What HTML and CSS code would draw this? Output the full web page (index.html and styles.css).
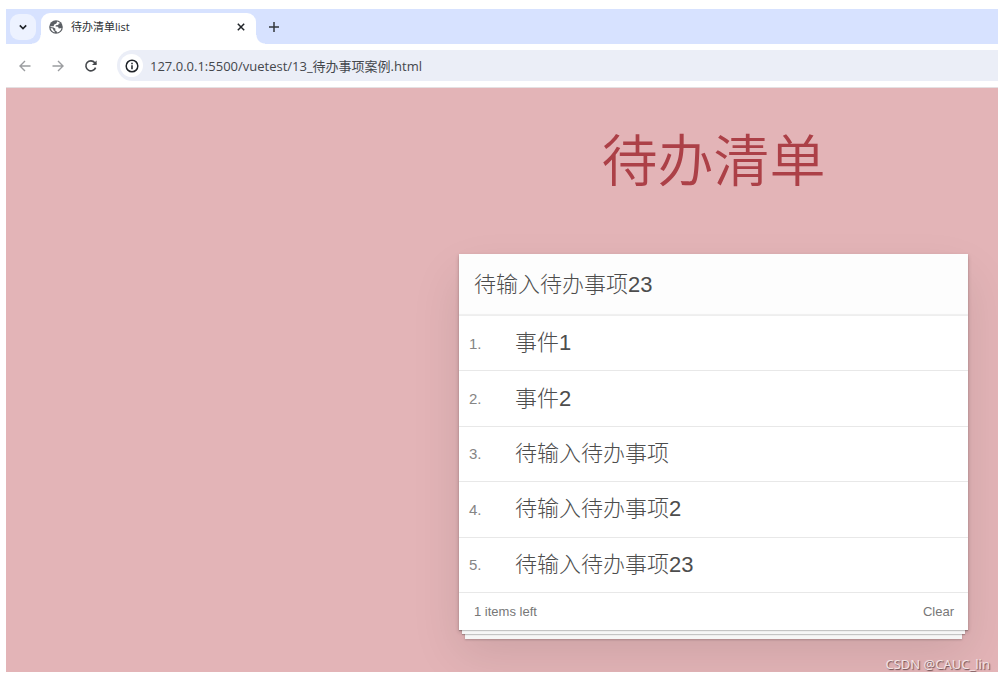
FILE: index.html
```html
<!DOCTYPE html>
<html lang="zh-CN">
<head>
<meta charset="utf-8">
<meta name="viewport" content="width=device-width, initial-scale=1">
<title>待办清单list</title>
<link rel="stylesheet" href="styles.css">
</head>
<body>
<div class="browser">
  <header class="tabs">
    <button class="tab-search" aria-label="Search tabs">
      <svg width="10" height="10" viewBox="0 0 10 10"><path d="M1.8 3.4 5 6.6 8.2 3.4" fill="none" stroke="#1f2328" stroke-width="1.6"/></svg>
    </button>
    <div class="tab">
      <svg class="globe" width="14" height="14" viewBox="0 0 14 14"><circle cx="7" cy="7" r="6.8" fill="#5b5f64"/><path d="M8.2 1.5C9.6 1.8 10.6 2.4 11.3 3.3L9.8 3.6 9.2 5 6.8 5.2 6.6 6.6 9 6.8 9.8 8.4 12.5 8A5.6 5.6 0 0 1 8 12.5L7.6 11.2 6.2 10.4 6.4 8.8 4.6 7.6 1.5 6.9 1.5 6.2 4.6 6.2 5.2 4.6 7.4 3.6Z" fill="#fff"/><path d="M1.6 8 3.8 8.6 4.6 10.4 5.6 10.9 5.6 12.4A5.5 5.5 0 0 1 1.6 8Z" fill="#fff"/></svg>
      <span class="tab-title">待办清单list</span>
      <button class="icon-button" aria-label="Close tab">
        <svg width="10" height="10" viewBox="0 0 10 10"><path d="M1.8 1.8 8.2 8.2M8.2 1.8 1.8 8.2" stroke="#1f2328" stroke-width="1.5"/></svg>
      </button>
    </div>
    <button class="icon-button new-tab" aria-label="New tab">
      <svg width="12" height="12" viewBox="0 0 12 12"><path d="M6 1V11M1 6H11" stroke="#33373c" stroke-width="1.5"/></svg>
    </button>
  </header>
  <nav class="toolbar">
    <button class="icon-button" aria-label="Back">
      <svg width="14" height="14" viewBox="0 0 14 14"><path d="M12.5 7H2M7 2 2 7 7 12" fill="none" stroke="#9b9da0" stroke-width="1.4"/></svg>
    </button>
    <button class="icon-button" aria-label="Forward">
      <svg width="14" height="14" viewBox="0 0 14 14"><path d="M1.5 7H12M7 2 12 7 7 12" fill="none" stroke="#9b9da0" stroke-width="1.4"/></svg>
    </button>
    <button class="icon-button" aria-label="Reload">
      <svg width="14" height="14" viewBox="0 0 14 14"><path d="M11.6 8.6A5 5 0 1 1 10.8 3.7L12 5" fill="none" stroke="#45484c" stroke-width="1.6"/><path d="M12.6 1.4V6H8Z" fill="#45484c"/></svg>
    </button>
    <div class="address">
      <button class="site-info" aria-label="Site information">
        <svg width="14" height="14" viewBox="0 0 14 14"><circle cx="7" cy="7" r="5.8" fill="none" stroke="#1f2328" stroke-width="1.5"/><path d="M7 6.3V10.2M7 3.7V5.2" stroke="#1f2328" stroke-width="1.5"/></svg>
      </button>
      <input class="url" type="text" aria-label="Address" value="127.0.0.1:5500/vuetest/13_待办事项案例.html">
    </div>
  </nav>
  <main class="page">
    <section class="todo">
      <h1 class="title">待办清单</h1>
      <div class="card">
        <input class="new-todo" type="text" aria-label="新待办事项" value="待输入待办事项23">
        <ol class="list">
          <li class="item"><span class="index">1.</span><span class="label">事件1</span></li>
          <li class="item"><span class="index">2.</span><span class="label">事件2</span></li>
          <li class="item"><span class="index">3.</span><span class="label">待输入待办事项</span></li>
          <li class="item"><span class="index">4.</span><span class="label">待输入待办事项2</span></li>
          <li class="item"><span class="index">5.</span><span class="label">待输入待办事项23</span></li>
        </ol>
        <footer class="summary">
          <span>1 items left</span>
          <button class="clear">Clear</button>
        </footer>
      </div>
    </section>
    <span class="watermark">CSDN @CAUC_lin</span>
  </main>
</div>
</body>
</html>
```

FILE: styles.css
```css
* {
  box-sizing: border-box;
}

body {
  margin: 0;
  background: #fff;
  font-family: "Liberation Sans", "Noto Sans CJK SC", sans-serif;
  font-weight: 300;
  color: #4d4d4d;
}

button,
input {
  margin: 0;
  padding: 0;
  border: 0;
  background: none;
  font: inherit;
  color: inherit;
}

svg {
  display: block;
}

.browser {
  display: flex;
  flex-direction: column;
  min-height: 100vh;
  padding: 9px 7px 8px 6px;
}

.tabs {
  display: flex;
  align-items: center;
  height: 35px;
  padding-left: 4px;
  overflow: hidden;
  background: #d7e2ff;
}

.tab-search {
  display: grid;
  place-items: center;
  width: 26px;
  height: 26px;
  margin-right: 5px;
  border-radius: 9px;
  background: #edf2ff;
}

.tab {
  position: relative;
  display: flex;
  align-items: center;
  gap: 8px;
  align-self: flex-end;
  width: 215px;
  height: 31px;
  padding: 0 10px 4px 8px;
  border-radius: 9px 9px 0 0;
  background: #fff;
}

/* Concave corners where the tab meets the toolbar */
.tab::before,
.tab::after {
  content: "";
  position: absolute;
  bottom: 0;
  width: 9px;
  height: 9px;
}

.tab::before {
  right: 100%;
  background: radial-gradient(circle at 0 0, transparent 8px, #fff 9px);
}

.tab::after {
  left: 100%;
  background: radial-gradient(circle at 100% 0, transparent 8px, #fff 9px);
}

.tab-title {
  flex: 1;
  font: 11px/16px "Open Sans", "Noto Sans CJK SC", sans-serif;
  color: #2c2f33;
}

.new-tab {
  margin-left: 12px;
}

.toolbar {
  display: flex;
  align-items: center;
  gap: 19px;
  height: 44px;
  padding-left: 12px;
  border-bottom: 1px solid #e4e0e2;
}

.address {
  display: flex;
  flex: 1;
  align-items: center;
  gap: 7px;
  height: 31px;
  padding-left: 3px;
  border-radius: 16px 0 0 16px;
  background: #ebeef7;
}

.site-info {
  display: grid;
  place-items: center;
  width: 23px;
  height: 23px;
  border-radius: 50%;
  background: #fff;
}

.url {
  flex: 1;
  min-width: 0;
  font: 13px/20px "Open Sans", "Noto Sans CJK SC", sans-serif;
  color: #44474c;
}

.page {
  position: relative;
  flex: 1;
  padding: 0 30px 32px;
  overflow: hidden;
  background: #e3b4b7;
}

.todo {
  max-width: 509px;
  margin-left: auto;
}

.title {
  margin: 0;
  padding: 34px 0 52px;
  font-size: 56px;
  font-weight: 350;
  line-height: 80px;
  text-align: center;
  color: #ac4047;
}

.card {
  background: #fff;
  box-shadow:
    0 1px 1px rgba(0, 0, 0, 0.2),
    0 7px 0 -3px #f6f6f6,
    0 8px 1px -3px rgba(0, 0, 0, 0.2),
    0 15px 0 -6px #f6f6f6,
    0 16px 2px -6px rgba(0, 0, 0, 0.2),
    0 2px 4px rgba(0, 0, 0, 0.2),
    0 23px 46px rgba(0, 0, 0, 0.1);
}

.new-todo {
  display: block;
  width: 100%;
  height: 62px;
  padding: 0 15px 6px;
  background: #fdfdfd;
  box-shadow: inset 0 -2px 1px rgba(0, 0, 0, 0.06);
  font-size: 22px;
}

.list {
  display: grid;
  grid-auto-rows: 1fr;
  min-height: 277px;
  margin: 0;
  padding: 0;
  list-style: none;
}

.item {
  display: flex;
  align-items: center;
  padding-left: 10px;
  border-bottom: 1px solid #e8e8e8;
}

.index {
  width: 46px;
  font-size: 15px;
  color: #858585;
}

.label {
  font-size: 22px;
  line-height: 32px;
}

.summary {
  display: flex;
  align-items: center;
  justify-content: space-between;
  height: 37px;
  padding: 0 14px 0 15px;
  font-size: 13px;
  color: #777;
}

.watermark {
  position: absolute;
  right: 8px;
  bottom: 0;
  font: 13px/16px "Noto Sans", sans-serif;
  color: #f3e3e4;
  text-shadow: 1px 1px 1px #6b4c4e;
}
```
